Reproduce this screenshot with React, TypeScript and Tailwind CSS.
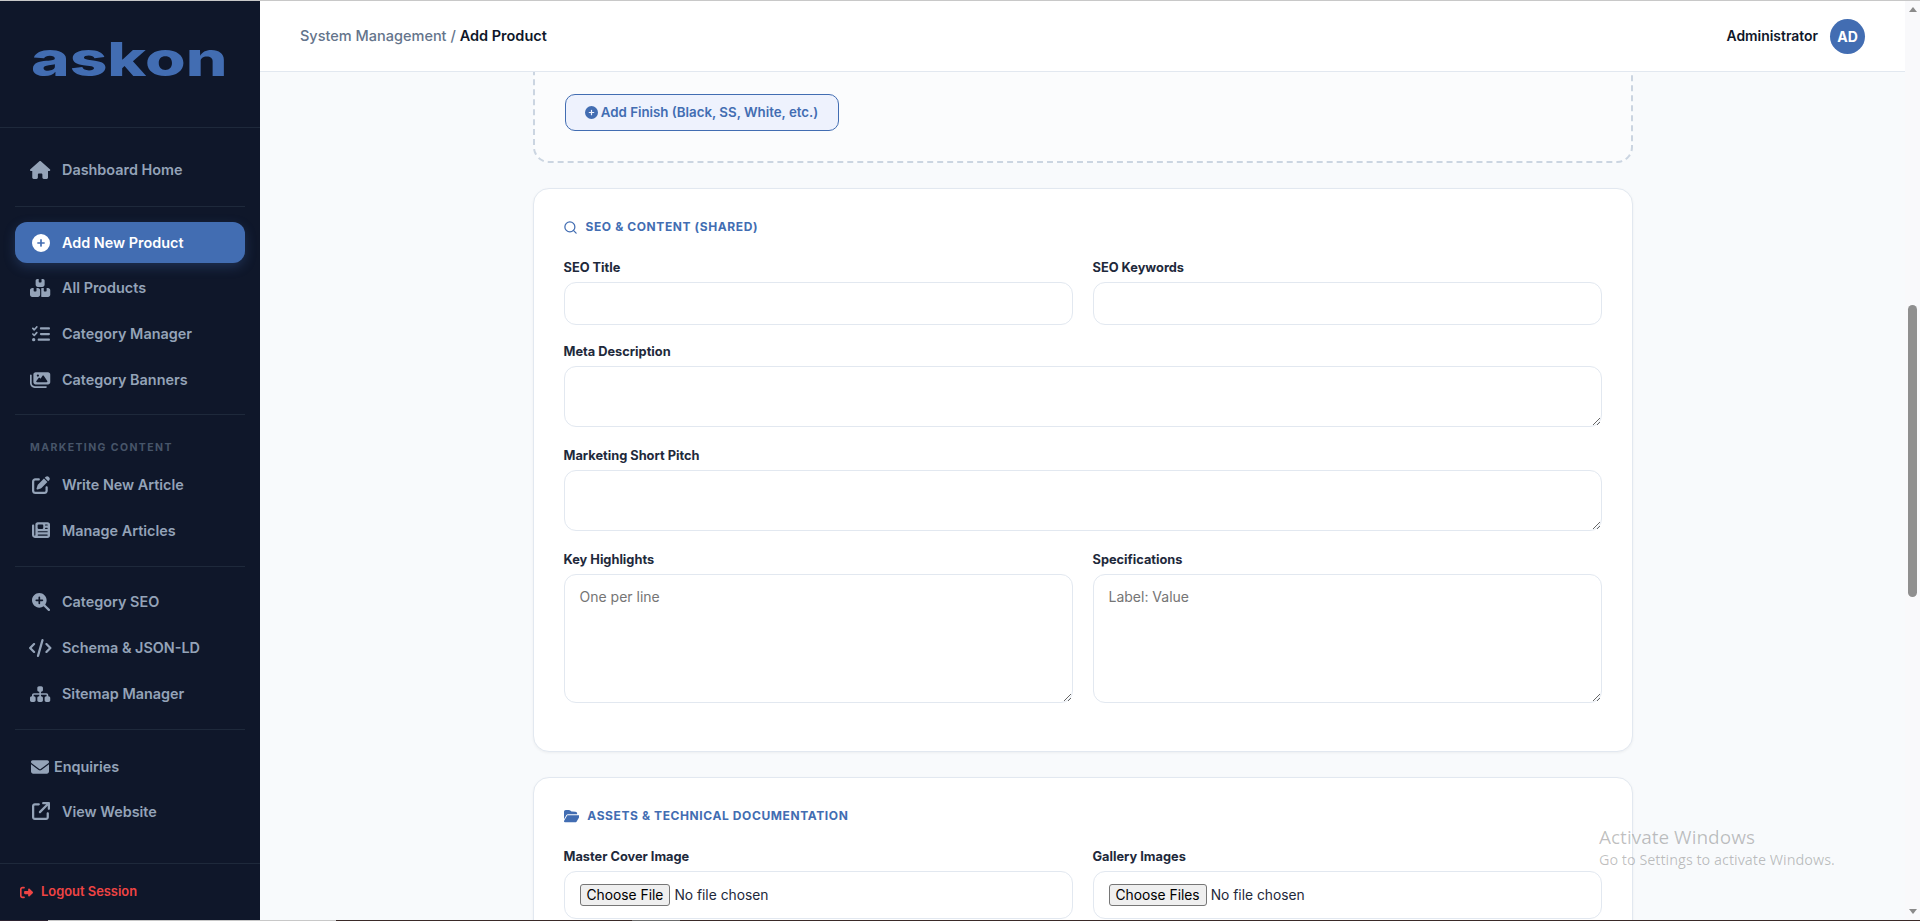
import React from "react";
import {
  FaHouse, FaCirclePlus, FaBoxesStacked, FaListCheck, FaImages, FaPenToSquare, FaNewspaper,
  FaMagnifyingGlassPlus, FaCode, FaSitemap, FaEnvelope, FaArrowUpRightFromSquare, FaRightFromBracket,
  FaFolderOpen,
} from "react-icons/fa6";
import { Search } from "lucide-react";

function NavItem({ icon: Icon, label, active, tight, iconCls = "w-[18px]" }: { icon: any; label: string; active?: boolean; tight?: boolean; iconCls?: string }) {
  return (
    <div
      className={
        "flex items-center h-[41px] mb-[4.8px] mx-[15px] px-[15px] rounded-[12px] text-[14.4px] font-semibold " +
        (active ? "bg-[#426db2] text-white shadow-[0_4px_12px_rgba(66,109,178,0.3)]" : "text-[#94a3b8]")
      }
    >
      {tight ? (
        <Icon className={"h-[18px] mr-[5px] ml-px shrink-0 " + iconCls} />
      ) : (
        <span className="w-[21px] mr-[11px] flex justify-center shrink-0">
          <Icon className={"h-[18px] shrink-0 " + iconCls} />
        </span>
      )}
      <span>{label}</span>
    </div>
  );
}

function Divider() {
  return <div className="mx-[15px] h-px bg-[#1e293b]" />;
}

function Label({ children }: { children: React.ReactNode }) {
  return <label className="block mb-[5px] text-[12.8px] leading-[18px] font-bold text-[#1e293b]">{children}</label>;
}

const inputCls = "block w-full border border-[#e2e8f0] rounded-[12px] bg-white outline-none";
const fileCls =
  " h-[48px] px-[15px] py-[12px] text-[13.8px] text-[#1e293b] file:h-[22px] file:px-[6px] file:mr-[4px] file:bg-[#efefef] file:border file:border-solid file:border-[#767676] file:rounded-[3px] file:text-[13.8px] file:text-black";

export default function App() {
  return (
    <div className="h-[921px] w-[1920px] overflow-hidden flex flex-col bg-[#f8fafc] font-['Inter','Liberation_Sans',sans-serif] relative">
      <div className="h-px bg-[#c8c8c8] shrink-0" />
      <div className="flex flex-1 min-h-0">
        <aside className="w-[260px] shrink-0 bg-[#0f172a] flex flex-col">
          <div className="h-[127px] border-b border-[#1e293b] shrink-0 flex justify-center">
            <span className="text-[47px] leading-[47px] mt-[34px] font-extrabold text-[#426db2] scale-x-[1.4] origin-center -translate-x-px">askon</span>
          </div>
          <div className="pt-[21px] h-[78px] shrink-0">
            <NavItem icon={FaHouse} label="Dashboard Home" iconCls="w-[20.25px]" />
          </div>
          <Divider />
          <div className="pt-[15px]">
            <NavItem icon={FaCirclePlus} label="Add New Product" active />
            <NavItem icon={FaBoxesStacked} label="All Products" iconCls="w-[20.25px]" />
            <NavItem icon={FaListCheck} label="Category Manager" />
            <NavItem icon={FaImages} label="Category Banners" iconCls="w-[20.25px]" />
          </div>
          <div className="h-[9px]" />
          <Divider />
          <div className="px-[30px] pt-[26px] pb-[9px] text-[10.5px] leading-[14px] font-bold tracking-[1.4px] text-[#475569]">MARKETING CONTENT</div>
          <NavItem icon={FaPenToSquare} label="Write New Article" />
          <NavItem icon={FaNewspaper} label="Manage Articles" />
          <div className="h-[10px]" />
          <Divider />
          <div className="pt-[15px]">
            <NavItem icon={FaMagnifyingGlassPlus} label="Category SEO" />
            <NavItem icon={FaCode} label="Schema & JSON-LD" iconCls="w-[22.5px]" />
            <NavItem icon={FaSitemap} label="Sitemap Manager" iconCls="w-[20.25px]" />
          </div>
          <div className="h-[10px]" />
          <Divider />
          <div className="pt-[16.5px]">
            <NavItem icon={FaEnvelope} label="Enquiries" tight />
            <div className="-mt-[1.5px]">
              <NavItem icon={FaArrowUpRightFromSquare} label="View Website" />
            </div>
          </div>
          <div className="mt-auto border-t border-[#1e293b] h-[57px] shrink-0 flex items-center pl-[20px] text-[12.9px] font-semibold text-[#ef4444]">
            <FaRightFromBracket className="h-[13px] w-[13px] mr-[8px]" />
            <span>Logout Session</span>
          </div>
        </aside>

        <div className="flex-1 min-w-0 flex flex-col">
          <header className="h-[71px] shrink-0 bg-white border-b border-[#e2e8f0] flex items-center justify-between pl-[40px] pr-[40px]">
            <div className="text-[14.5px] font-medium text-[#64748b]">
              System Management / <span className="text-[#0f172a] font-semibold">Add Product</span>
            </div>
            <div className="flex items-center gap-[12px]">
              <span className="text-[13.9px] font-semibold text-[#0f172a]">Administrator</span>
              <span className="w-[35px] h-[35px] rounded-full bg-[#426db2] text-white text-[14px] font-bold flex items-center justify-center">AD</span>
            </div>
          </header>
          <main className="flex-1 min-h-0 overflow-hidden">
            <div className="w-[1100px] mx-auto">
              <div className="-mt-[20px] h-[111px] border-2 border-dashed border-[#cbd5e1] bg-[#fbfcfd] rounded-[16px] pt-[40px] pl-[30px]">
                <button className="h-[37px] w-[274px] rounded-[10px] border border-[#426db2] bg-[#eef2fd] text-[#426db2] text-[13.3px] font-semibold flex items-center justify-center gap-[3px]">
                  <FaCirclePlus className="h-[13px] w-[13px]" />
                  <span>Add Finish (Black, SS, White, etc.)</span>
                </button>
              </div>

              <section className="mt-[25px] bg-white border border-[#e2e8f0] rounded-[16px] px-[30px] h-[564px] pt-[30px] shadow-[0_1px_3px_rgba(0,0,0,0.05)]">
                <h3 className="flex items-center text-[12px] leading-[16px] font-bold tracking-[0.6px] text-[#426db2] mb-[24px]">
                  <Search className="w-[15px] h-[15px] -ml-[1px] mr-[8px]" strokeWidth={2} />
                  SEO &amp; CONTENT (SHARED)
                </h3>
                <div className="grid grid-cols-2 gap-[20px] mb-[18px]">
                  <div>
                    <Label>SEO Title</Label>
                    <input className={inputCls + " h-[43px]"} />
                  </div>
                  <div>
                    <Label>SEO Keywords</Label>
                    <input className={inputCls + " h-[43px]"} />
                  </div>
                </div>
                <div className="mb-[20px]">
                  <Label>Meta Description</Label>
                  <textarea className={inputCls + " h-[61px]"} />
                </div>
                <div className="mb-[20px]">
                  <Label>Marketing Short Pitch</Label>
                  <textarea className={inputCls + " h-[61px]"} />
                </div>
                <div className="grid grid-cols-2 gap-[20px]">
                  <div>
                    <Label>Key Highlights</Label>
                    <textarea placeholder="One per line" className={inputCls + " h-[129px] px-[15px] py-[11px] text-[14px] placeholder:text-[#757575]"} />
                  </div>
                  <div>
                    <Label>Specifications</Label>
                    <textarea placeholder="Label: Value" className={inputCls + " h-[129px] px-[15px] py-[11px] text-[14px] placeholder:text-[#757575]"} />
                  </div>
                </div>
              </section>

              <section className="mt-[25px] bg-white border border-[#e2e8f0] rounded-[16px] px-[30px] pt-[30px] h-[300px] shadow-[0_1px_3px_rgba(0,0,0,0.05)]">
                <h3 className="flex items-center text-[12px] leading-[16px] font-bold tracking-[0.6px] text-[#426db2] mb-[24px]">
                  <FaFolderOpen className="h-[14px] w-[15.75px] mr-[8px]" />
                  ASSETS &amp; TECHNICAL DOCUMENTATION
                </h3>
                <div className="grid grid-cols-2 gap-[20px]">
                  <div>
                    <Label>Master Cover Image</Label>
                    <input type="file" className={inputCls + fileCls} />
                  </div>
                  <div>
                    <Label>Gallery Images</Label>
                    <input type="file" multiple className={inputCls + fileCls} />
                  </div>
                </div>
              </section>
            </div>
          </main>
        </div>

        <div className="w-[15px] shrink-0 bg-[#f9f9fb] flex flex-col items-center">
          <div className="h-[17px] flex items-center justify-center">
            <div className="w-0 h-0 border-l-[4.5px] border-r-[4.5px] border-b-[5px] border-l-transparent border-r-transparent border-b-[#8a8a8a]" />
          </div>
          <div className="mt-[287px] h-[292px] w-[9px] rounded-[5px] bg-[#8f8f8f]" />
          <div className="mt-auto h-[17px] flex items-center justify-center">
            <div className="w-0 h-0 border-l-[4.5px] border-r-[4.5px] border-t-[5px] border-l-transparent border-r-transparent border-t-[#8a8a8a]" />
          </div>
        </div>
      </div>
      <div className="h-px shrink-0 flex">
        <div className="w-[48px] bg-[#2b2230]" />
        <div className="w-[288px] bg-[#c8c8c8]" />
        <div className="w-[296px] bg-[#3a2a28]" />
        <div className="w-[48px] bg-[#6b6b6b]" />
        <div className="flex-1 bg-[#3a2a28]" />
      </div>

      <div className="absolute left-[1599px] top-[824px] font-['Open_Sans','Liberation_Sans',sans-serif] text-black/25 pointer-events-none">
        <div className="text-[19px] leading-[26px]">Activate Windows</div>
        <div className="text-[14.4px] leading-[18px] mt-[1px]">Go to Settings to activate Windows.</div>
      </div>
    </div>
  );
}
